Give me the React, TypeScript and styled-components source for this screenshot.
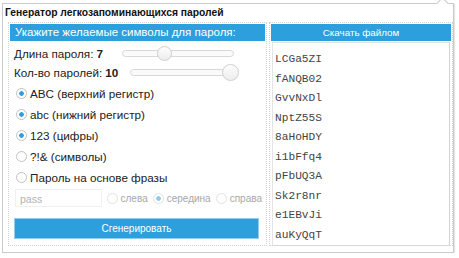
import React from "react"
import styled, { createGlobalStyle } from "styled-components"

const blue = "#2c9fdc"

const GlobalStyle = createGlobalStyle`
  html, body {
    margin: 0;
    padding: 0;
    background: #ffffff;
  }
  body {
    font-family: "Liberation Sans", Arial, sans-serif;
    color: #222;
  }
`

const Popup = styled.div`
  position: relative;
  width: 452px;
  height: 250px;
  margin: 3px 0 0 2px;
  border: 1px solid #cacaca;
  box-shadow: 1px 1px 1px rgba(0, 0, 0, 0.1);
  box-sizing: border-box;
  padding: 0 0 0 2px;
`

const Notch = styled.div`
  position: absolute;
  top: -5px;
  right: 6px;
  width: 8px;
  height: 8px;
  background: #fff;
  border-top: 1px solid #cacaca;
  border-left: 1px solid #cacaca;
  transform: rotate(45deg);
`

const Title = styled.div`
  font-size: 10.3px;
  font-weight: bold;
  color: #111;
  height: 18px;
  line-height: 18px;
`

const Columns = styled.div`
  display: flex;
  gap: 2px;
  margin-left: 3px;
`

const Panel = styled.div<{ width: number }>`
  width: ${(p) => p.width}px;
  height: 224px;
  box-sizing: border-box;
  border: 1px dotted #d2d2d2;
  padding: 1px;
  display: flex;
  flex-direction: column;
`

const Bar = styled.div<{ size: number }>`
  background: ${blue};
  color: #fff;
  height: 17px;
  line-height: 17px;
  font-size: ${(p) => p.size}px;
  padding: 0 5px;
  white-space: nowrap;
  flex: none;
`

const CenterBar = styled(Bar)`
  text-align: center;
`

const Body = styled.div`
  padding: 2px 0 0 4px;
  font-size: 11.7px;
`

const Row = styled.div<{ h: number }>`
  display: flex;
  align-items: center;
  height: ${(p) => p.h}px;
  white-space: nowrap;
`

const Label = styled.span<{ width: number }>`
  width: ${(p) => p.width}px;
  flex: none;
`

const Value = styled.b`
  margin-left: 3px;
`

const Slider = styled.div<{ width: number }>`
  position: relative;
  width: ${(p) => p.width}px;
  height: 5px;
  border: 1px solid #d8d8d8;
  border-radius: 4px;
  background: #fafafa;
  flex: none;
`

const Thumb = styled.div<{ pos: number; size: number }>`
  position: absolute;
  top: 50%;
  left: ${(p) => p.pos}px;
  width: ${(p) => p.size}px;
  height: ${(p) => p.size}px;
  margin-top: ${(p) => -p.size / 2}px;
  border-radius: 50%;
  border: 1px solid #cfcfcf;
  background: linear-gradient(#fdfdfd, #ededed);
  box-sizing: border-box;
`

const Radio = styled.span<{ checked?: boolean; faint?: boolean }>`
  display: inline-block;
  box-sizing: border-box;
  width: 11px;
  height: 11px;
  border-radius: 50%;
  border: 1px solid ${(p) => (p.faint ? "#e2e2e2" : "#c2c2c2")};
  background: ${(p) =>
    p.checked
      ? `radial-gradient(circle, ${p.faint ? "#8ccbee" : blue} 0 2px, #fff 2.6px)`
      : "#fff"};
  margin: 0 3px 0 2px;
  flex: none;
`

const PhraseRow = styled.div`
  display: flex;
  align-items: center;
  height: 21px;
  font-size: 10px;
  color: #a8a8a8;
  white-space: nowrap;
`

const PassInput = styled.div`
  width: 91px;
  height: 18px;
  line-height: 18px;
  box-sizing: border-box;
  border: 1px solid #f0f0f0;
  padding-left: 4px;
  font-size: 10.5px;
  color: #b2b2b2;
  margin: 0 3px 0 1px;
`

const Side = styled.span`
  display: inline-flex;
  align-items: center;
  margin-right: 3px;
`

const Button = styled.div`
  margin-top: 9.5px;
  width: 245px;
  height: 21px;
  line-height: 19px;
  box-sizing: border-box;
  border: 1px solid #93cdee;
  background: ${blue};
  color: #fff;
  text-align: center;
  font-size: 10px;
`

const List = styled.div`
  margin: 1px 1px 0;
  flex: 1;
  border: 1px solid #e4e4e4;
  border-right-color: #d6d6d6;
  border-bottom-color: #d6d6d6;
  padding: 7px 0 0 2px;
`

const Item = styled.div`
  font-family: "Liberation Mono", "Courier New", monospace;
  font-size: 11.2px;
  color: #444;
  height: 19.5px;
  line-height: 19.5px;
`

const passwords = [
  "LCGa5ZI",
  "fANQB02",
  "GvvNxDl",
  "NptZ55S",
  "8aHoHDY",
  "i1bFfq4",
  "pFbUQ3A",
  "Sk2r8nr",
  "e1EBvJi",
  "auKyQqT"
]

const options = [
  { label: "ABC (верхний регистр)", checked: true },
  { label: "abc (нижний регистр)", checked: true },
  { label: "123 (цифры)", checked: true },
  { label: "?!& (символы)", checked: false },
  { label: "Пароль на основе фразы", checked: false }
]

export default function App() {
  return (
    <>
      <GlobalStyle />
      <Popup>
        <Notch />
        <Title>Генератор легкозапоминающихся паролей</Title>
        <Columns>
          <Panel width={259}>
            <Bar size={11.5}>Укажите желаемые символы для пароля:</Bar>
            <Body>
              <Row h={20}>
                <Label width={108}>
                  Длина пароля:<Value>7</Value>
                </Label>
                <Slider width={110}>
                  <Thumb pos={34} size={15} />
                </Slider>
              </Row>
              <Row h={19.5}>
                <Label width={116}>
                  Кол-во паролей:<Value>10</Value>
                </Label>
                <Slider width={105}>
                  <Thumb pos={91} size={17} />
                </Slider>
              </Row>
              {options.map((o) => (
                <Row h={21} key={o.label}>
                  <Radio checked={o.checked} />
                  {o.label}
                </Row>
              ))}
              <PhraseRow>
                <PassInput>pass</PassInput>
                <Side>
                  <Radio faint />
                  слева
                </Side>
                <Side>
                  <Radio faint checked />
                  середина
                </Side>
                <Side>
                  <Radio faint />
                  справа
                </Side>
              </PhraseRow>
              <Button>Сгенерировать</Button>
            </Body>
          </Panel>
          <Panel width={184}>
            <CenterBar size={9.8}>Скачать файлом</CenterBar>
            <List>
              {passwords.map((p) => (
                <Item key={p}>{p}</Item>
              ))}
            </List>
          </Panel>
        </Columns>
      </Popup>
    </>
  )
}
